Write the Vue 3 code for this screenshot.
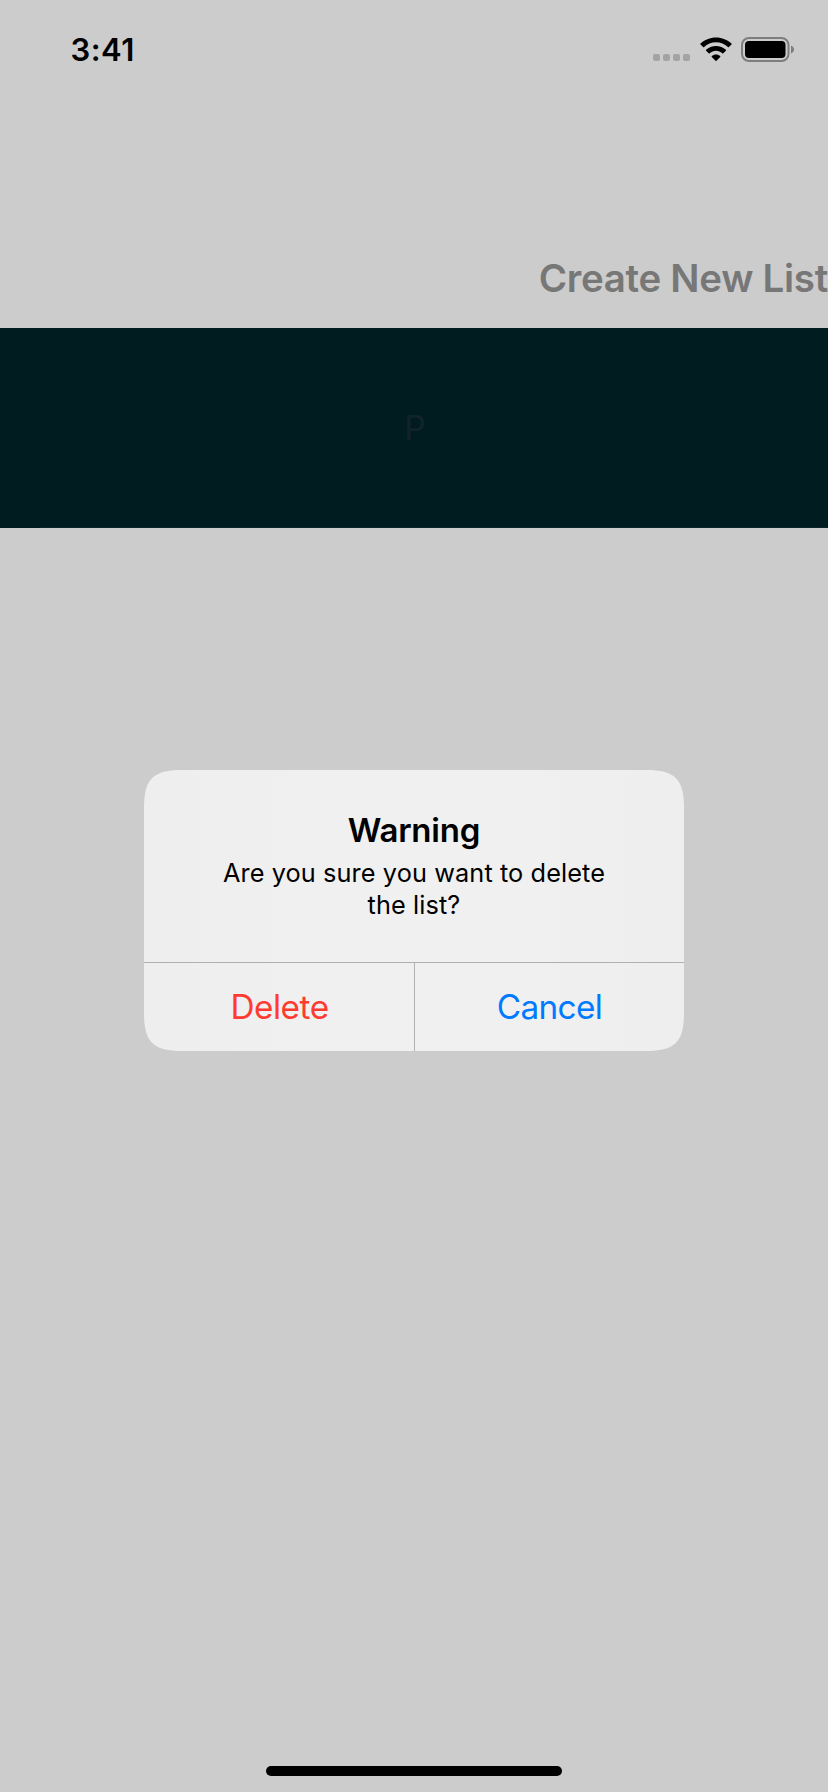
<script setup>
const signalDots = 4
const actions = [
  { label: 'Delete', kind: 'destructive' },
  { label: 'Cancel', kind: 'default' },
]
</script>

<template>
  <div class="screen">
    <header class="status">
      <span class="time">3:41</span>
      <div class="indicators">
        <div class="signal"><i v-for="n in signalDots" :key="n"></i></div>
        <svg class="wifi" width="32" height="25" viewBox="0 0 32 25">
          <path d="M16 0.4C22 0.4 27.4 2.7 31.5 6.6Q31.9 7.1 31.5 7.5L28.9 10.1Q28.4 10.5 27.9 10.1C24.7 7 20.6 5.300 16 5.300S7.300 7 4.100 10.100Q3.600 10.500 3.100 10.100L0.500 7.500Q0.100 7.100 0.500 6.600C4.600 2.700 10 0.400 16 0.400Z" />
          <path d="M16 9C19.800 9 23.300 10.400 25.900 12.800Q26.400 13.300 25.900 13.700L23.300 16.300Q22.800 16.700 22.300 16.300C20.600 14.700 18.400 13.800 16 13.800S11.400 14.700 9.700 16.300Q9.200 16.700 8.700 16.300L6.100 13.700Q5.600 13.300 6.100 12.800C8.700 10.400 12.200 9 16 9Z" />
          <path d="M16 17.400C17.600 17.400 19.100 18 20.200 19Q20.600 19.500 20.200 19.900L16.500 23.700Q16 24.100 15.500 23.700L11.800 19.900Q11.400 19.500 11.800 19C12.900 18 14.400 17.400 16 17.400Z" />
        </svg>
        <svg class="battery" width="54" height="25" viewBox="0 0 54 25">
          <rect x="1" y="1" width="46.500" height="23" rx="7" fill="none" stroke="#7e7e7e" stroke-width="2" />
          <rect x="4" y="4" width="40.500" height="17" rx="4" />
          <path d="M50 8.500C54 10 54 15 50 16.500Z" fill="#7e7e7e" />
        </svg>
      </div>
    </header>

    <div class="toolbar"><span class="create">Create New List</span></div>
    <div class="row"><span class="row-label">P</span></div>

    <section class="alert">
      <div class="body">
        <h1>Warning</h1>
        <p>Are you sure you want to delete<br>the list?</p>
      </div>
      <div class="actions">
        <button v-for="a in actions" :key="a.label" :class="a.kind">{{ a.label }}</button>
      </div>
    </section>

    <div class="home"></div>
  </div>
</template>

<style>
body {
  background: #ccc;
}
</style>

<style scoped>
.screen {
  width: 828px;
  height: 1792px;
  display: flex;
  flex-direction: column;
  overflow: hidden;
  background: #ccc;
  color: #000;
  font-family: Inter, "Liberation Sans", sans-serif;
}

.status {
  height: 100px;
  box-sizing: border-box;
  padding: 0 33px 0 70.5px;
  display: flex;
  justify-content: space-between;
}

.time {
  font-size: 31px;
  font-weight: 600;
  line-height: 100px;
  letter-spacing: 0.5px;
  white-space: nowrap;
}

.indicators {
  height: 25px;
  padding-top: 37px;
  display: flex;
}

.signal {
  display: flex;
  gap: 3px;
  padding-top: 17px;
  margin-right: 10px;
}

.signal i {
  width: 7px;
  height: 7px;
  border-radius: 2px;
  background: #a3a3a3;
}

.wifi {
  margin-right: 9px;
}

.toolbar {
  height: 228px;
  box-sizing: border-box;
  padding-top: 148px;
  display: flex;
  justify-content: flex-end;
}

.create {
  font-size: 38.5px;
  font-weight: 600;
  line-height: 60px;
  letter-spacing: -0.3px;
  color: #777;
  white-space: nowrap;
}

.row {
  height: 200px;
  box-sizing: border-box;
  padding-left: 2px;
  display: flex;
  align-items: center;
  justify-content: center;
  background: linear-gradient(#0b2429, #0b2429) 40px 199px / 788px 1px no-repeat #001c21;
}

.row-label {
  font-size: 33.5px;
  color: #12232c;
}

.alert {
  width: 540px;
  height: 281px;
  margin: 242px auto 0;
  clip-path: path("M0 38C0 9 9 0 38 0H502C531 0 540 9 540 38V243C540 272 531 281 502 281H38C9 281 0 272 0 243Z");
  display: flex;
  flex-direction: column;
  background: linear-gradient(90deg, #eee, #f0f0f0 30%, #f0f0f0 70%, #eee);
}

.body {
  height: 193px;
  box-sizing: border-box;
  padding-top: 40px;
  border-bottom: 1px solid #b0b0b0;
  text-align: center;
}

h1 {
  margin: 0;
  font-size: 33px;
  font-weight: 600;
  line-height: 40px;
  letter-spacing: -0.2px;
}

p {
  margin: 7px 0 0;
  font-size: 25.3px;
  line-height: 32px;
  letter-spacing: 0.1px;
}

.actions {
  flex: 1;
  display: grid;
  grid-template-columns: 270px 270px;
}

button {
  margin: 0;
  padding: 0;
  border: 0;
  background: none;
  font-family: inherit;
  font-size: 33.3px;
  letter-spacing: -0.6px;
}

.destructive {
  padding-left: 1px;
  color: #ff3b30;
  letter-spacing: -0.45px;
}

.default {
  color: #007aff;
  border-left: 1px solid #b0b0b0;
}

.home {
  width: 296px;
  height: 10px;
  margin: auto auto 16px;
  border-radius: 5px;
  background: #000;
}
</style>
